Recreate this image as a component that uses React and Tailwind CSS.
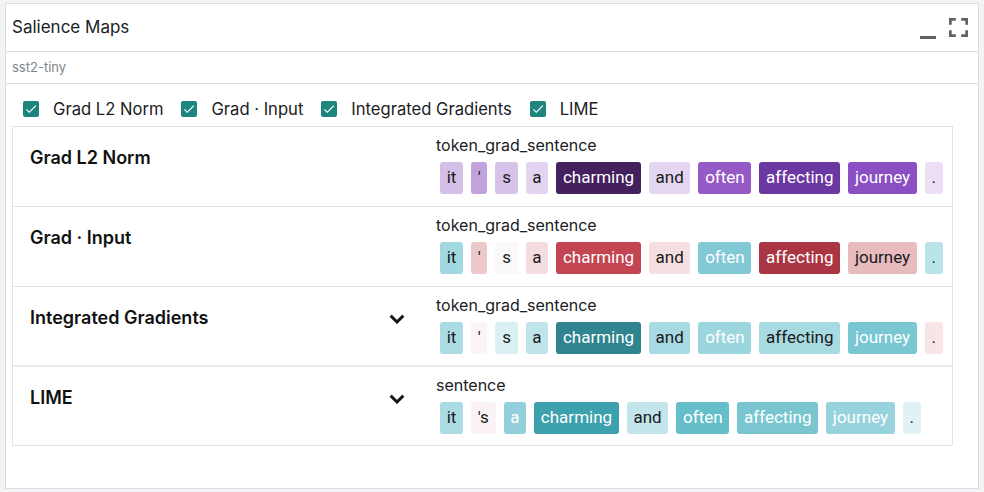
import React from 'react';

const ui = { fontFamily: 'Inter, "Noto Sans", sans-serif' };
const chipFont = { fontFamily: 'Roboto, "Liberation Sans", sans-serif' };

const methods = ['Grad L2 Norm', 'Grad · Input', 'Integrated Gradients', 'LIME'];

// [text, background, white text?]
const rows = [
    {
        name: 'Grad L2 Norm',
        field: 'token_grad_sentence',
        chevron: false,
        tokens: [
            ['it', '#d4bfe7'], ["'", '#c2a2dd'], ['s', '#d7c3ea'], ['a', '#e3d5f1'],
            ['charming', '#44205f', true], ['and', '#e4d6f1'], ['often', '#955ac6', true],
            ['affecting', '#6b37a0', true], ['journey', '#8a4fc2', true], ['.', '#ede0f6'],
        ],
    },
    {
        name: 'Grad · Input',
        field: 'token_grad_sentence',
        chevron: false,
        tokens: [
            ['it', '#a2d8e1'], ["'", '#edc8cb'], ['s', '#fbf8f8'], ['a', '#f5dcdf'],
            ['charming', '#c24551', true], ['and', '#f6dfe1'], ['often', '#80c9d5', true],
            ['affecting', '#ab3643', true], ['journey', '#e8bbbf'], ['.', '#bae3ea'],
        ],
    },
    {
        name: 'Integrated Gradients',
        field: 'token_grad_sentence',
        chevron: true,
        tokens: [
            ['it', '#abdce4'], ["'", '#fbf4f4'], ['s', '#dbf0f3'], ['a', '#bfe4ea'],
            ['charming', '#308490', true], ['and', '#a7dae2'], ['often', '#9bd5de', true],
            ['affecting', '#a8dae2'], ['journey', '#78c7d2', true], ['.', '#f7e5e7'],
        ],
    },
    {
        name: 'LIME',
        field: 'sentence',
        chevron: true,
        tokens: [
            ['it', '#abdce4'], ["'s", '#fbf3f3'], ['a', '#91d0da', true],
            ['charming', '#3da0ad', true], ['and', '#c3e5eb'], ['often', '#64bfcb', true],
            ['affecting', '#79c6d1', true], ['journey', '#97d3dc', true], ['.', '#e0f2f5'],
        ],
    },
];

function Checkbox() {
    return (
        <span className="w-[16px] h-[16px] rounded-[2px] bg-[#1e857e] flex items-center justify-center shrink-0">
            <svg width="14" height="14" viewBox="0 0 24 24">
                <path d="M9 16.17L4.83 12l-1.42 1.41L9 19 21 7l-1.41-1.41z" fill="#fff" />
            </svg>
        </span>
    );
}

function Chevron() {
    return (
        <svg width="28" height="28" viewBox="0 0 24 24" className="-mt-[1px]">
            <path d="M16.59 8.59L12 13.17 7.41 8.59 6 10l6 6 6-6z" fill="#111" stroke="#111" strokeWidth="0.6" />
        </svg>
    );
}

export default function App() {
    return (
        <div className="w-[984px] h-[492px] bg-[#f1f3f4] pt-[3px] pl-[5px]" style={ui}>
            <div className="w-[974px] h-[486px] bg-white border border-[#dadce0] flex flex-col">
                {/* header */}
                <div className="h-[48px] border-b border-[#dadce0] flex items-start justify-between">
                    <div className="pl-[6px] pt-[12px] text-[17px] leading-[22px] text-[#202124]">Salience Maps</div>
                    <div className="flex items-start pr-[10px]">
                        <div className="w-[16px] h-[2.5px] bg-[#5f6368] mt-[32px] mr-[13px]" />
                        <svg width="19" height="19" viewBox="5 5 14 14" className="mt-[14px]">
                            <path d="M7 14H5v5h5v-2H7v-3zm-2-4h2V7h3V5H5v5zm12 7h-3v2h5v-5h-2v3zM14 5v2h3v3h2V5h-5z" fill="#5f6368" />
                        </svg>
                    </div>
                </div>

                {/* dataset */}
                <div className="h-[32px] border-b border-[#dadce0] flex items-center pl-[6px] text-[13px] text-[#80868b]">
                    sst2-tiny
                </div>

                {/* method toggles */}
                <div className="flex items-center pl-[17px] pt-[16px] text-[16.6px] leading-[18px] text-[#202124]">
                    {methods.map((m) => (
                        <label key={m} className="flex items-center mr-[18px]">
                            <Checkbox />
                            <span className="ml-[14px]">{m}</span>
                        </label>
                    ))}
                </div>

                {/* results table */}
                <div className="ml-[6px] mt-[8px] w-[941px] border border-[#e3e3e6]">
                    {rows.map((row, i) => (
                        <div
                            key={row.name}
                            className={
                                i === 3
                                    ? 'flex h-[78px]'
                                    : i === 2
                                      ? 'flex h-[80px] border-b-2 border-[#e8e8ee]'
                                      : 'flex h-[80px] border-b border-[#e3e3e6]'
                            }
                        >
                            <div className="w-[423px] shrink-0 flex items-start justify-between pl-[17px] pr-[25px] pt-[19px]">
                                <div className="text-[18px] leading-[24px] font-semibold text-[#111]">{row.name}</div>
                                {row.chevron && <Chevron />}
                            </div>
                            <div className="pt-[8px]">
                                <div className="text-[16px] leading-[20px] text-[#202124]">{row.field}</div>
                                <div className="flex flex-nowrap mt-[7px]" style={chipFont}>
                                    {row.tokens.map(([t, bg, light], j) => (
                                        <span
                                            key={j}
                                            className={
                                                light
                                                    ? 'h-[32px] mx-[4px] px-[6.7px] rounded-[3px] flex items-center text-[17px] text-white whitespace-pre'
                                                    : 'h-[32px] mx-[4px] px-[6.7px] rounded-[3px] flex items-center text-[17px] text-[#1a1a1a] whitespace-pre'
                                            }
                                            style={{ backgroundColor: bg }}
                                        >
                                            {t}
                                        </span>
                                    ))}
                                </div>
                            </div>
                        </div>
                    ))}
                </div>
            </div>
        </div>
    );
}
